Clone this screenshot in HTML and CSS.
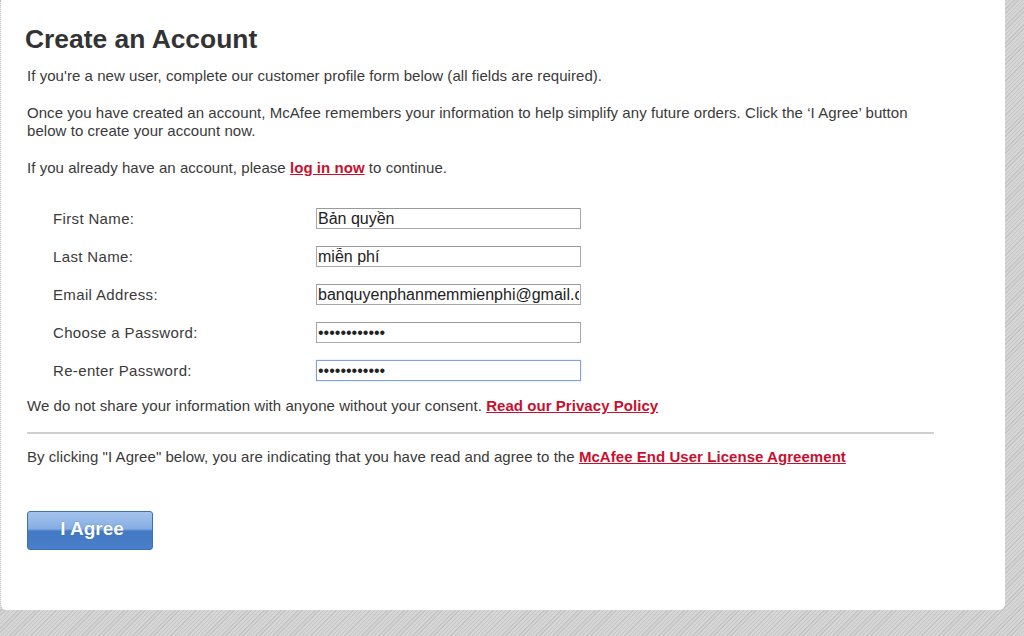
FILE: index.html
```html
<!DOCTYPE html>
<html>
<head>
<meta charset="utf-8">
<title>Create an Account</title>
<link rel="stylesheet" href="styles.css">
</head>
<body>
<div class="panel">
  <h1 class="title">Create an Account</h1>
  <p class="txt p1">If you're a new user, complete our customer profile form below (all fields are required).</p>
  <p class="txt p2">Once you have created an account, McAfee remembers your information to help simplify any future orders. Click the ‘I Agree’ button below to create your account now.</p>
  <p class="txt p3">If you already have an account, please <a class="lnk" href="#">log in now</a> to continue.</p>
  <div class="form">
    <div class="row"><label class="lbl">First Name:</label><input class="fld" type="text" value="Bản quyền"></div>
    <div class="row"><label class="lbl">Last Name:</label><input class="fld" type="text" value="miễn phí"></div>
    <div class="row"><label class="lbl">Email Address:</label><input class="fld" type="text" value="banquyenphanmemmienphi@gmail.com"></div>
    <div class="row"><label class="lbl">Choose a Password:</label><input class="fld" type="password" value="abcdefghijkl"></div>
    <div class="row"><label class="lbl">Re-enter Password:</label><input class="fld focus" type="password" value="abcdefghijkl"></div>
  </div>
  <p class="txt p4">We do not share your information with anyone without your consent. <a class="lnk" href="#">Read our Privacy Policy</a></p>
  <div class="rule"></div>
  <p class="txt p5">By clicking "I Agree" below, you are indicating that you have read and agree to the <a class="lnk" href="#">McAfee End User License Agreement</a></p>
  <button class="agree" type="button">I Agree</button>
</div>
</body>
</html>
```
FILE: styles.css
```css
html, body {
  margin: 0;
  padding: 0;
  height: 100%;
}
body {
  background-color: #cbcbcb;
  background-image: repeating-linear-gradient(-45deg, #c4c4c4 0px, #c4c4c4 1px, #d6d6d6 1px, #d6d6d6 3px);
  font-family: "Liberation Sans", Arial, sans-serif;
  color: #3a3a3a;
  overflow: hidden;
}
.panel {
  box-sizing: border-box;
  width: 1005px;
  height: 610px;
  background: #fff;
  border-left: 1px dotted #b8b8b8;
  border-radius: 0 0 6px 6px;
  padding: 24px 0 0 24px;
}
.title {
  margin: 0;
  font-size: 26.4px;
  font-weight: bold;
  line-height: 30px;
  color: #333;
}
.txt {
  margin: 0 0 0 2px;
  font-size: 15px;
  letter-spacing: 0.05px;
  line-height: 18px;
  color: #3a3a3a;
}
.p1 { margin-top: 13px; }
.p2 { margin-top: 19px; width: 900px; }
.p3 { margin-top: 19px; }
.lnk {
  color: #c8102e;
  font-weight: bold;
  text-decoration: underline;
}
.form {
  margin: 31px 0 0 28px;
  display: flex;
  flex-direction: column;
  gap: 17px;
}
.row {
  display: flex;
  align-items: center;
  height: 21px;
}
.lbl {
  width: 263px;
  font-size: 15px;
  letter-spacing: 0.35px;
  color: #3a3a3a;
}
.fld {
  box-sizing: border-box;
  width: 265px;
  height: 21px;
  margin: 0;
  padding: 0 1px;
  border: 1px solid #a9a9a9;
  border-top-color: #9a9a9a;
  font-family: "Liberation Sans", Arial, sans-serif;
  font-size: 16px;
  color: #222;
  background: #fff;
  outline: none;
}
.fld.focus {
  border-color: #7fa3e0;
  box-shadow: 0 0 1px #9bb8e8;
}
.p4 { margin-top: 16px; }
.rule {
  margin: 17px 0 0 2px;
  width: 907px;
  height: 2px;
  background: #d0d0d0;
}
.p5 { margin-top: 14px; }
.agree {
  display: block;
  margin: 45px 0 0 2px;
  width: 126px;
  height: 39px;
  border: 1px solid #3d6fb6;
  border-radius: 3px;
  background: linear-gradient(to bottom, #a4c3ec 0%, #86aee4 45%, #4378c4 52%, #4a7fc9 100%);
  color: #fff;
  font-family: "Liberation Sans", Arial, sans-serif;
  font-size: 19px;
  font-weight: bold;
  text-shadow: 0 0 1px #2c5a9e;
  padding: 0 0 4px 4px;
}
```
